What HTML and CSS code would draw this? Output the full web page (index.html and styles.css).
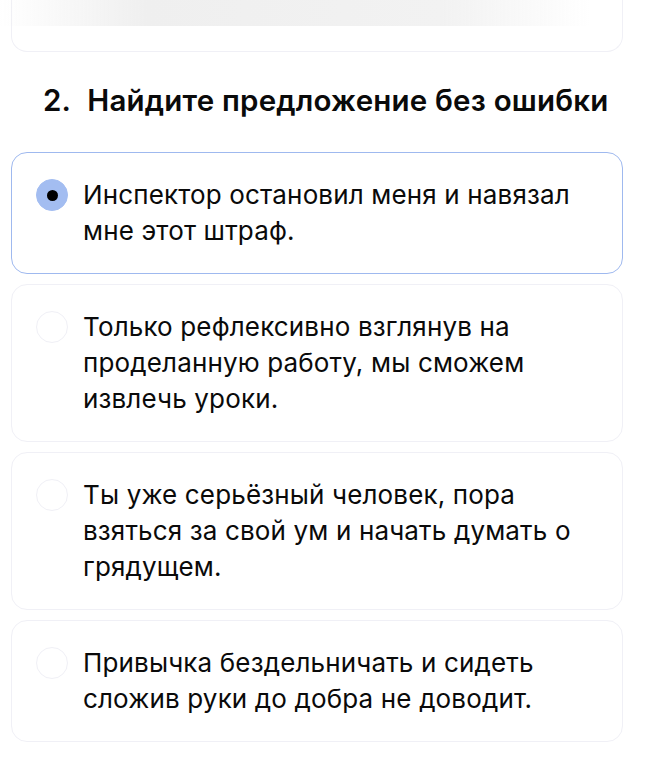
FILE: index.html
```html
<!DOCTYPE html>
<html lang="ru">

<head>
    <meta charset="UTF-8">
    <meta name="viewport" content="width=device-width, initial-scale=1.0">
    <title>Тест</title>
    <link rel="stylesheet" href="styles.css">
</head>

<body>

    <div class="fade"></div>

    <div class="page">
        <div class="card prev"></div>

        <h2 class="question"><span class="num">2.</span>Найдите предложение без ошибки</h2>

        <div class="answers">
            <div class="card option selected">
                <span class="radio"></span>
                <p>Инспектор остановил меня и навязал мне этот штраф.</p>
            </div>
            <div class="card option">
                <span class="radio"></span>
                <p>Только рефлексивно взглянув на проделанную работу, мы сможем извлечь уроки.</p>
            </div>
            <div class="card option">
                <span class="radio"></span>
                <p>Ты уже серьёзный человек, пора взяться за свой ум и начать думать о грядущем.</p>
            </div>
            <div class="card option">
                <span class="radio"></span>
                <p>Привычка бездельничать и сидеть сложив руки до добра не доводит.</p>
            </div>
        </div>
    </div>

</body>

</html>
```

FILE: styles.css
```css
* {
    margin: 0;
    padding: 0;
    box-sizing: border-box;
}

body {
    font-family: 'Inter', 'Open Sans', sans-serif;
    background: #fff;
    color: #0a0a0a;
}

.page {
    width: 612px;
    margin-left: 11px;
}

.fade {
    position: fixed;
    top: 0;
    left: 0;
    width: 590px;
    height: 26px;
    background: linear-gradient(to right, rgba(238, 238, 238, 0), #efefef 25%, #f2f2f2 75%, rgba(242, 242, 242, 0));
    z-index: 5;
}

.card {
    background: #fff;
    border: 1px solid #f0f0f6;
    border-radius: 16px;
}

.card.prev {
    height: 52px;
    border-top: none;
    border-radius: 0 0 16px 16px;
}

.question {
    font-size: 29.5px;
    font-weight: 600;
    line-height: 40px;
    letter-spacing: 0.2px;
    margin: 28px 0 32px;
    padding-left: 32px;
    white-space: nowrap;
}

.question .num {
    margin-right: 16px;
}

.answers {
    display: flex;
    flex-direction: column;
    gap: 10px;
}

.option {
    display: flex;
    align-items: flex-start;
    gap: 15px;
    padding: 24px 40px 24px 24px;
}

.option.selected {
    border: 1.5px solid #9fb9ef;
}

.option p {
    font-size: 26px;
    line-height: 36px;
    letter-spacing: 0.15px;
}

.radio {
    flex: none;
    width: 32px;
    height: 32px;
    margin-top: 2px;
    border-radius: 50%;
    border: 1px solid #f0f0f6;
    display: flex;
    align-items: center;
    justify-content: center;
}

.selected .radio {
    background: #a3bdf1;
    border-color: #a3bdf1;
}

.selected .radio::after {
    content: "";
    width: 11px;
    height: 11px;
    border-radius: 50%;
    background: #000;
}
```
